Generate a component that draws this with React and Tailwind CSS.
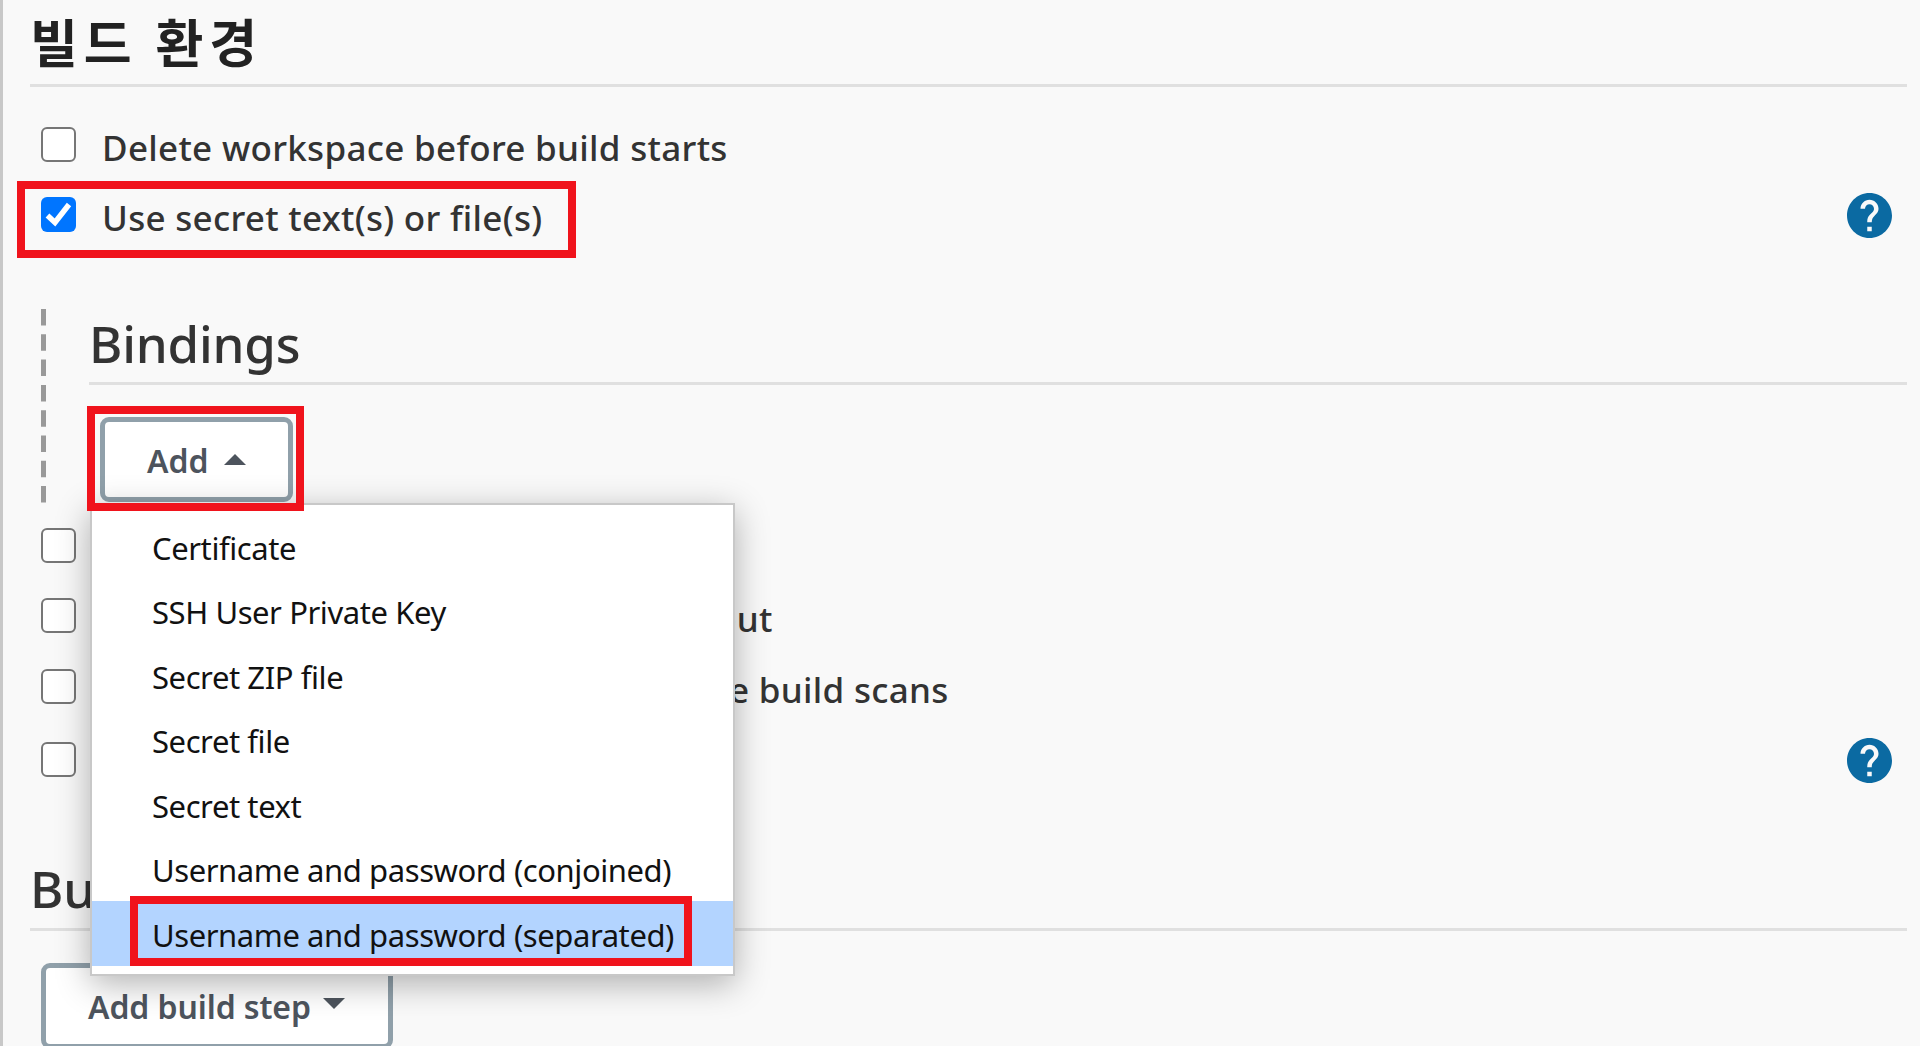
import React from 'react';
import clsx from 'clsx';

const bindingTypes = [
  'Certificate',
  'SSH User Private Key',
  'Secret ZIP file',
  'Secret file',
  'Secret text',
  'Username and password (conjoined)',
  'Username and password (separated)',
];

const Checkbox = ({ checked }) => (
  <span
    className={clsx(
      'flex size-[35px] shrink-0 items-center justify-center rounded-[6px]',
      checked ? 'bg-[#0075ff]' : 'border-2 border-[#767676] bg-white'
    )}
  >
    {checked && (
      <svg viewBox="0 0 35 35" className="size-[35px]" fill="none" stroke="#fff" strokeWidth="5.5">
        <path d="M6.5 18.5 L14 25.5 L28 7.5" />
      </svg>
    )}
  </span>
);

const HelpIcon = () => (
  <svg viewBox="2 2 20 20" className="mt-[2px] size-[45px] shrink-0" fill="#0b6aa2">
    <path d="M12 2C6.48 2 2 6.48 2 12s4.48 10 10 10 10-4.48 10-10S17.52 2 12 2zm1 17h-2v-2h2v2zm2.07-7.75-.9.92C13.45 12.9 13 13.5 13 15h-2v-.5c0-1.1.45-2.1 1.17-2.83l1.24-1.26c.37-.36.59-.86.59-1.41 0-1.1-.9-2-2-2s-2 .9-2 2H8c0-2.21 1.79-4 4-4s4 1.79 4 4c0 .88-.36 1.68-.93 2.25z" />
  </svg>
);

const OptionRow = ({ label, checked, help, className, labelClass = 'pl-[26px]' }) => (
  <div className={clsx('flex items-center pl-[11px] pr-[15px]', className)}>
    <Checkbox checked={checked} />
    <span
      className={clsx(
        'flex-1 whitespace-nowrap pt-[7px] text-[35px] leading-[48px] font-medium tracking-[0.3px]',
        labelClass
      )}
    >
      {label}
    </span>
    {help && <HelpIcon />}
  </div>
);

const Caret = ({ up }) => (
  <svg viewBox="0 0 22 11" className="h-[11px] w-[22px]" fill="#4d545d">
    <path d={up ? 'M0 11 L11 0 L22 11Z' : 'M0 0 L22 0 L11 11Z'} />
  </svg>
);

export default function App() {
  return (
    <div className="relative flex h-[1046px] w-[1920px] flex-col overflow-hidden border-l-[3px] border-[#c8c8c8] bg-[#f9f9f9] pl-[27px] pr-[13px] font-['Noto_Sans','Noto_Sans_CJK_KR',sans-serif] text-[#333]">
      {/* Build environment */}
      <h2 className="h-[87px] shrink-0 border-b-[3px] border-[#e0e0e0] pt-[5px] font-['Noto_Sans_CJK_KR',sans-serif] text-[52px] leading-[72px] font-bold tracking-[6px] text-[#222]">
        빌드 환경
      </h2>

      <div className="shrink-0 pt-[22px]">
        <OptionRow className="h-[70px]" label="Delete workspace before build starts" />
        <OptionRow className="h-[70px]" label="Use secret text(s) or file(s)" checked help />
      </div>

      {/* Bindings of the secret option */}
      <div className="mt-[60px] flex h-[194px] shrink-0 pl-[11px]">
        <svg className="h-[194px] w-[5px] shrink-0">
          <line x1="2.5" y1="0" x2="2.5" y2="194" stroke="#999" strokeWidth="5" strokeDasharray="16.5 8.8" />
        </svg>
        <div className="ml-[43px] flex-1">
          <h3 className="h-[76px] border-b-[3px] border-[#e0e0e0] text-[51px] leading-[69px] font-medium tracking-[-0.2px]">
            Bindings
          </h3>
          <button className="mt-[32px] ml-[11px] flex h-[85px] w-[193px] items-center rounded-[9px] border-[5px] border-[#90a0aa] bg-white pl-[42px] text-[32px] font-semibold text-[#4d545d]">
            <span className="pt-[2px]">Add</span>
            <span className="ml-[15px]"><Caret up /></span>
          </button>
        </div>
      </div>

      {/* Rows behind the open dropdown: only the label ends stick out */}
      <div className="shrink-0 pt-[7px]">
        <OptionRow className="h-[70px]" />
        <OptionRow className="h-[70px]" label="out" labelClass="pl-[639px]" />
        <OptionRow className="h-[73px]" label="e build scans" labelClass="pl-[653px]" />
        <OptionRow className="h-[73px]" help />
      </div>

      {/* Build steps */}
      <h2 className="mt-[59px] h-[76px] shrink-0 border-b-[3px] border-[#e0e0e0] text-[51px] leading-[67px] font-medium">
        Build
      </h2>
      <button className="mt-[32px] ml-[11px] flex h-[86px] w-[352px] shrink-0 items-center rounded-[9px] border-[5px] border-[#90a0aa] bg-white pl-[42px] text-[32px] font-semibold text-[#4d545d]">
        <span className="whitespace-nowrap pt-[2px] tracking-[-0.1px]">Add build step</span>
        <span className="mb-[6px] ml-[12px]"><Caret /></span>
      </button>

      {/* Add dropdown */}
      <ul className="absolute top-[503px] left-[87px] h-[473px] w-[645px] border-2 border-[#c8c8c8] bg-white pt-[9px] font-['Noto_Sans',sans-serif] text-[31px] tracking-[-0.42px] text-[#111] shadow-[0_8px_32px_rgba(0,0,0,0.3)]">
        {bindingTypes.map((type, i) => (
          <li
            key={type}
            className={clsx(
              'flex h-[64.5px] items-center whitespace-nowrap pt-[3px] pl-[60px]',
              i === bindingTypes.length - 1 && 'bg-[#b3d4ff]'
            )}
          >
            {type}
          </li>
        ))}
      </ul>

      {/* Highlight frames */}
      <div className="absolute top-[181px] left-[14px] h-[77px] w-[559px] border-8 border-[#f0131c]" />
      <div className="absolute top-[406px] left-[84px] h-[105px] w-[217px] border-8 border-[#f0131c]" />
      <div className="absolute top-[896px] left-[127px] h-[70px] w-[562px] border-8 border-[#f0131c]" />
    </div>
  );
}
